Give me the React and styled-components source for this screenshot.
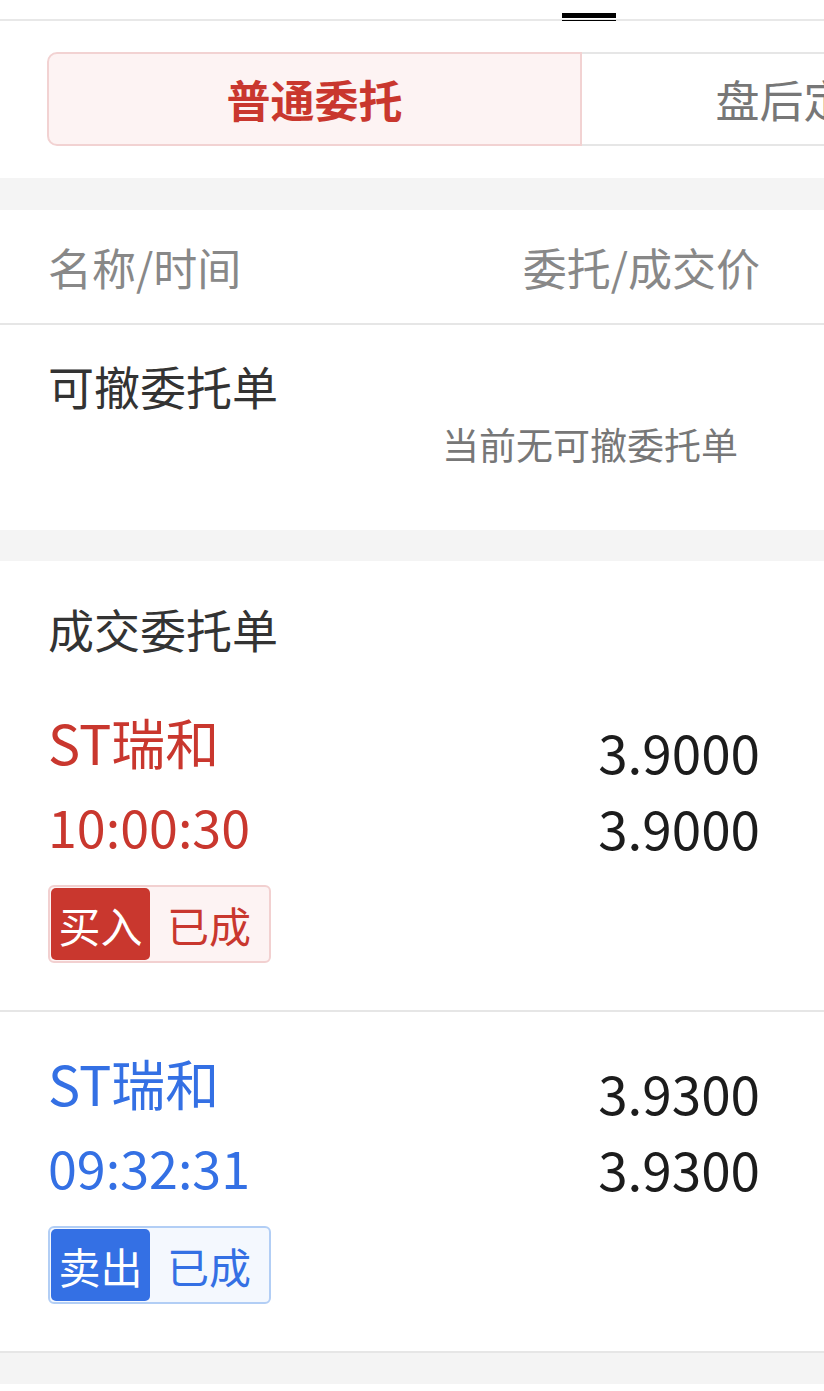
import React from "react";
import styled, { createGlobalStyle } from "styled-components";

const GlobalStyle = createGlobalStyle`
  html, body {
    margin: 0;
    padding: 0;
    background: #fff;
  }
  body {
    font-family: "Noto Sans CJK SC", "Noto Sans", sans-serif;
    color: #333;
  }
`;

const RED = "#c9372e";
const BLUE = "#3470e4";

const Page = styled.div`
  width: 824px;
  background: #fff;
  overflow: hidden;
`;

const TopStrip = styled.div`
  position: relative;
  height: 19px;
  border-bottom: 2px solid #e8e8e8;
`;

// little black marker that sits over the top line
const Handle = styled.div`
  position: absolute;
  left: 562px;
  top: 13px;
  width: 54px;
  height: 5px;
  background: #000;
  &::after {
    content: "";
    position: absolute;
    left: 0;
    right: 0;
    top: 7px;
    height: 1px;
    background: #000;
  }
`;

const TabBar = styled.div`
  display: flex;
  padding: 31px 0 32px 47px;
  overflow: hidden;
`;

const Tab = styled.div`
  flex: 0 0 ${(p) => p.$w}px;
  height: 94px;
  box-sizing: border-box;
  display: flex;
  align-items: center;
  justify-content: center;
  font-size: 44px;
  font-weight: ${(p) => (p.$active ? 700 : 400)};
  color: ${(p) => (p.$active ? RED : "#777")};
  background: ${(p) => (p.$active ? "#fdf3f3" : "#fff")};
  border: 2px solid ${(p) => (p.$active ? "#f2d2d2" : "#e6e6e6")};
  border-radius: ${(p) => (p.$active ? "10px 0 0 10px" : "0")};
  border-left: ${(p) => (p.$active ? "" : "none")};
  white-space: nowrap;
`;

const Gap = styled.div`
  height: ${(p) => p.$h || 32}px;
  background: #f4f4f4;
`;

const HeaderRow = styled.div`
  display: flex;
  justify-content: space-between;
  align-items: center;
  height: 113px;
  padding: 0 64px 0 48px;
  border-bottom: 2px solid #e6e6e6;
  font-size: 44px;
  color: #888;
`;

const Section = styled.div`
  padding: ${(p) => p.$pad};
`;

const SectionTitle = styled.div`
  font-size: 46px;
  line-height: 46px;
  color: #333;
  padding-left: 48px;
`;

const EmptyText = styled.div`
  text-align: right;
  padding-right: 86px;
  margin-top: 18px;
  font-size: 37px;
  line-height: 36px;
  color: #777;
`;

const Trade = styled.div`
  display: flex;
  justify-content: space-between;
  padding: 29px 64px 47px 48px;
  border-bottom: 2px solid #e6e6e6;
  color: ${(p) => (p.$side === "buy" ? RED : BLUE)};
`;

const LeftCol = styled.div`
  display: flex;
  flex-direction: column;
  align-items: flex-start;
`;

const Line = styled.div`
  font-size: ${(p) => p.$size}px;
  line-height: 84px;
  height: 84px;
`;

const Badge = styled.div`
  display: flex;
  margin-top: 17px;
  height: 78px;
  box-sizing: border-box;
  border: 2px solid ${(p) => (p.$side === "buy" ? "#f2d0d0" : "#b2cef5")};
  background: ${(p) => (p.$side === "buy" ? "#fdf3f3" : "#f4f8fe")};
  border-radius: 6px;
  padding: 1px;
  font-size: 42px;
`;

const SidePart = styled.span`
  display: flex;
  align-items: center;
  justify-content: center;
  width: 99px;
  color: #fff;
  background: ${(p) => (p.$side === "buy" ? RED : BLUE)};
  border-radius: 5px;
`;

const StatePart = styled.span`
  display: flex;
  align-items: center;
  padding: 0 17px;
`;

const RightCol = styled.div`
  display: flex;
  flex-direction: column;
  align-items: flex-end;
  margin-top: 13px;
  color: #1c1c1c;
`;

const Price = styled.div`
  font-size: 53px;
  line-height: 76px;
`;

const BottomSpace = styled.div`
  height: 9px;
`;

const trades = [
  { name: "ST瑞和", time: "10:00:30", side: "buy", label: "买入", state: "已成", price: "3.9000", deal: "3.9000" },
  { name: "ST瑞和", time: "09:32:31", side: "sell", label: "卖出", state: "已成", price: "3.9300", deal: "3.9300" },
];

export default function App() {
  return (
    <Page>
      <GlobalStyle />
      <TopStrip>
        <Handle />
      </TopStrip>
      <TabBar>
        <Tab $active $w={535}>普通委托</Tab>
        <Tab $w={445}>盘后定价</Tab>
      </TabBar>
      <Gap $h={32} />
      <HeaderRow>
        <span>名称/时间</span>
        <span>委托/成交价</span>
      </HeaderRow>
      <Section $pad="37px 0 68px">
        <SectionTitle>可撤委托单</SectionTitle>
        <EmptyText>当前无可撤委托单</EmptyText>
      </Section>
      <Gap $h={31} />
      <Section $pad="44px 0 20px">
        <SectionTitle>成交委托单</SectionTitle>
      </Section>
      {trades.map((t) => (
        <Trade key={t.time} $side={t.side}>
          <LeftCol>
            <Line $size={54}>{t.name}</Line>
            <Line $size={52}>{t.time}</Line>
            <Badge $side={t.side}>
              <SidePart $side={t.side}>{t.label}</SidePart>
              <StatePart>{t.state}</StatePart>
            </Badge>
          </LeftCol>
          <RightCol>
            <Price>{t.price}</Price>
            <Price>{t.deal}</Price>
          </RightCol>
        </Trade>
      ))}
      <Gap $h={31} />
      <BottomSpace />
    </Page>
  );
}
